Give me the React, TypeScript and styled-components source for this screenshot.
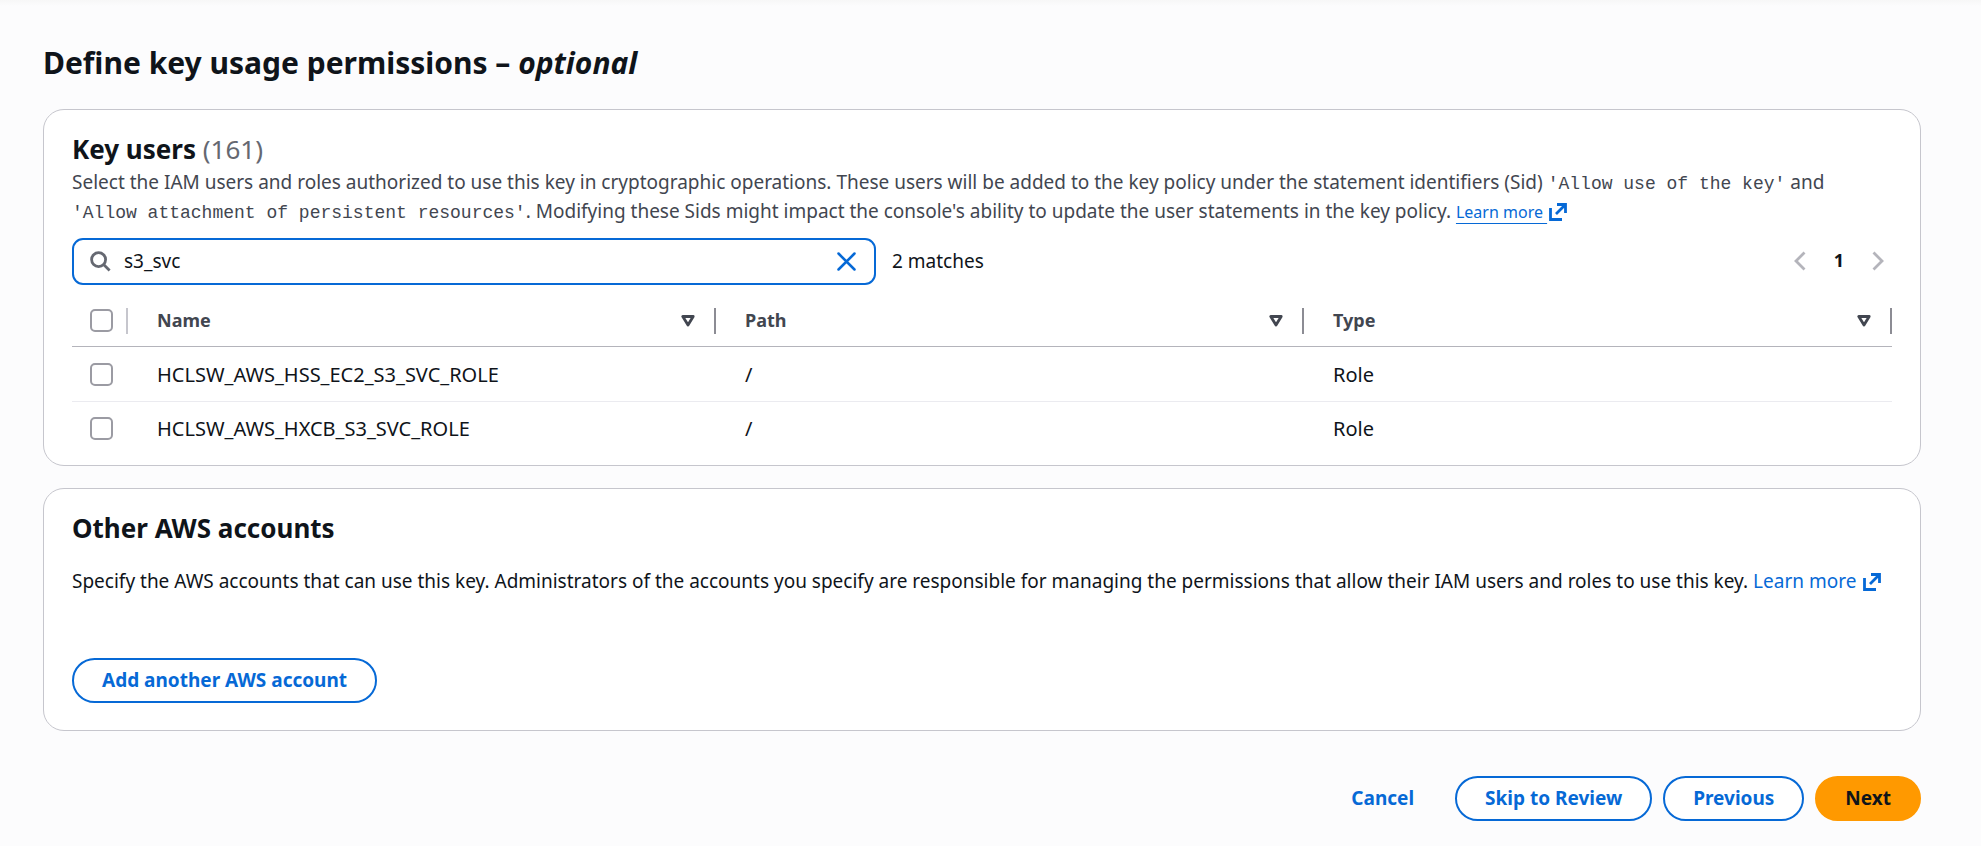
import React, { useState } from "react";
import styled, { createGlobalStyle } from "styled-components";

const color = {
  page: "#fcfcfd",
  text: "#0f141a",
  secondary: "#424650",
  muted: "#656871",
  link: "#0669d6",
  border: "#c6c6cd",
  divider: "#8c8c94",
  rowLine: "#ebebf0",
  primary: "#ff9900",
};

const GlobalStyle = createGlobalStyle`
  * { box-sizing: border-box; }
  body {
    margin: 0;
    background: ${color.page};
    color: ${color.text};
    font: 400 19px/29px "Noto Sans", "Open Sans", sans-serif;
  }
  button, input { font: inherit; color: inherit; }
`;

const Page = styled.main`
  padding: 45px 60px 24px 43px;
  background: linear-gradient(#f7f7f7, ${color.page} 6px);
`;

const PageTitle = styled.h1`
  margin: 0 0 28px;
  font-size: 30px;
  line-height: 36px;
  font-weight: 700;
`;

const Cards = styled.div`
  display: flex;
  flex-direction: column;
  gap: 22px;
`;

const Card = styled.section<{ $bottom: number }>`
  padding: 21px 28px ${(p) => p.$bottom}px;
  border: 1px solid ${color.border};
  border-radius: 21px;
  background: #fff;
`;

const CardTitle = styled.h2`
  margin: 0;
  font-size: 26px;
  line-height: 37px;
  font-weight: 700;
`;

const Counter = styled.span`
  font-weight: 400;
  color: ${color.muted};
`;

const Description = styled.p`
  margin: 0;
  color: ${color.secondary};
`;

const Code = styled.code`
  font: 18px/18px "Liberation Mono", monospace;
  white-space: nowrap;
`;

const Link = styled.a<{ $small?: boolean }>`
  color: ${color.link};
  font-size: ${(p) => (p.$small ? 16 : 19)}px;
  line-height: 18px;
  white-space: nowrap;
  text-decoration: ${(p) => (p.$small ? "underline" : "none")};
  text-underline-offset: 5px;
  svg {
    margin-left: 2px;
    vertical-align: -3px;
  }
`;

const Toolbar = styled.div`
  display: flex;
  align-items: center;
  gap: 16px;
  margin: 12px 0 10px;
`;

const SearchBox = styled.div`
  flex: 0 1 804px;
  display: flex;
  align-items: center;
  gap: 13px;
  height: 47px;
  padding: 0 18px 0 16px;
  border: 2px solid ${color.link};
  border-radius: 11px;
  background: #fff;
`;

const SearchInput = styled.input`
  flex: 1;
  min-width: 0;
  padding: 0;
  border: 0;
  outline: 0;
  background: transparent;
`;

const IconButton = styled.button`
  display: flex;
  padding: 0;
  border: 0;
  background: none;
  cursor: pointer;
`;

const Pagination = styled.nav`
  display: flex;
  align-items: center;
  gap: 28px;
  margin: 0 8px 2px auto;
`;

const PageNumber = styled.button`
  padding: 0;
  border: 0;
  background: none;
  font-size: 18px;
  font-weight: 700;
`;

const Table = styled.table`
  width: 100%;
  table-layout: fixed;
  border-collapse: separate;
  border-spacing: 0;
  font-size: 20px;
`;

const SelectColumn = styled.col`
  width: 56px;
`;

const HeaderCell = styled.th`
  height: 52px;
  padding: 0;
  border-bottom: 1px solid #b4b4bb;
  color: ${color.secondary};
  font-size: 18px;
  font-weight: 700;
  text-align: left;
`;

const HeaderContent = styled.div<{ $select?: boolean }>`
  display: flex;
  align-items: center;
  justify-content: space-between;
  padding-left: ${(p) => (p.$select ? 18 : 29)}px;
`;

const SortGroup = styled.div`
  display: flex;
  align-items: center;
  gap: 19px;
`;

const Divider = styled.span<{ $light?: boolean }>`
  width: 2px;
  height: 26px;
  background: ${(p) => (p.$light ? color.border : color.divider)};
`;

const Row = styled.tr`
  & + & td { border-top: 1px solid ${color.rowLine}; }
`;

const Cell = styled.td<{ $select?: boolean }>`
  height: 54px;
  padding: 0 0 0 ${(p) => (p.$select ? 18 : 29)}px;
`;

const Checkbox = styled.input.attrs({ type: "checkbox" })`
  appearance: none;
  display: block;
  width: 23px;
  height: 23px;
  margin: 0;
  border: 2px solid #9b9ba3;
  border-radius: 5px;
  background: #fff;
  &:checked { background: ${color.link}; border-color: ${color.link}; }
`;

const AccountsText = styled.p`
  margin: 20px 0 62px;
`;

const Button = styled.button<{ $variant?: "primary" | "link" }>`
  height: 45px;
  padding: 0 28px;
  border: 2px solid
    ${(p) => (p.$variant === "primary" ? color.primary : p.$variant === "link" ? "transparent" : color.link)};
  border-radius: 23px;
  background: ${(p) => (p.$variant === "primary" ? color.primary : p.$variant === "link" ? "transparent" : "#fff")};
  color: ${(p) => (p.$variant === "primary" ? color.text : color.link)};
  font-weight: 700;
  white-space: nowrap;
  cursor: pointer;
`;

const Actions = styled.footer`
  display: flex;
  justify-content: flex-end;
  gap: 11px;
  margin-top: 45px;
`;

const ExternalIcon = () => (
  <svg width="18" height="18" viewBox="0 0 18 18" fill="none" stroke="currentColor" strokeWidth="2.8" aria-hidden="true">
    <path d="M1.500 5v11.500h11.500" />
    <path d="M8 1.500h8.500v8.500M16 2L7 11" />
  </svg>
);

const SearchIcon = () => (
  <svg width="21" height="21" viewBox="0 0 21 21" fill="none" stroke={color.muted} strokeWidth="2.8" aria-hidden="true">
    <circle cx="8.6" cy="8.6" r="7" />
    <path d="M13.6 13.6l6 6" />
  </svg>
);

const ClearIcon = () => (
  <svg width="19" height="19" viewBox="0 0 19 19" fill="none" stroke={color.link} strokeWidth="2.5" strokeLinecap="round" aria-hidden="true">
    <path d="M1.5 1.5l16 16M17.5 1.5l-16 16" />
  </svg>
);

const Chevron = ({ right }: { right?: boolean }) => (
  <svg width="12" height="20" viewBox="0 0 12 20" fill="none" stroke="#b4b4bb" strokeWidth="2.8" aria-hidden="true">
    <path d={right ? "M1.5 1.5L10 10l-8.500 8.500" : "M10.500 1.500L2 10l8.500 8.500"} />
  </svg>
);

const SortIcon = () => (
  <svg width="14" height="12" viewBox="0 0 14 12" fill="none" stroke={color.secondary} strokeWidth="2.8" strokeLinejoin="round" aria-hidden="true">
    <path d="M1.800 1.500h10.400L7 10z" />
  </svg>
);

const columns = ["Name", "Path", "Type"];
const roles = [
  { name: "HCLSW_AWS_HSS_EC2_S3_SVC_ROLE", path: "/", type: "Role" },
  { name: "HCLSW_AWS_HXCB_S3_SVC_ROLE", path: "/", type: "Role" },
];

export default function App() {
  const [query, setQuery] = useState("s3_svc");
  const matches = roles.filter((r) => r.name.toLowerCase().includes(query.toLowerCase()));

  return (
    <>
      <GlobalStyle />
      <Page>
        <PageTitle>
          Define key usage permissions – <em>optional</em>
        </PageTitle>
        <Cards>
          <Card $bottom={10}>
            <CardTitle>
              Key users <Counter>(161)</Counter>
            </CardTitle>
            <Description>
              Select the IAM users and roles authorized to use this key in cryptographic operations. These users will be
              added to the key policy under the statement identifiers (Sid) <Code>'Allow use of the key'</Code> and{" "}
              <Code>'Allow attachment of persistent resources'</Code>. Modifying these Sids might impact the console's
              ability to update the user statements in the key policy.{" "}
              <Link href="#key-users" $small>
                Learn more&nbsp;
                <ExternalIcon />
              </Link>
            </Description>
            <Toolbar>
              <SearchBox>
                <SearchIcon />
                <SearchInput
                  aria-label="Find key users"
                  value={query}
                  onChange={(e) => setQuery(e.target.value)}
                />
                <IconButton aria-label="Clear" onClick={() => setQuery("")}>
                  <ClearIcon />
                </IconButton>
              </SearchBox>
              <span>{matches.length} matches</span>
              <Pagination aria-label="Pages">
                <IconButton aria-label="Previous page">
                  <Chevron />
                </IconButton>
                <PageNumber>1</PageNumber>
                <IconButton aria-label="Next page">
                  <Chevron right />
                </IconButton>
              </Pagination>
            </Toolbar>
            <Table>
              <colgroup>
                <SelectColumn />
                <col />
                <col />
                <col />
              </colgroup>
              <thead>
                <tr>
                  <HeaderCell>
                    <HeaderContent $select>
                      <Checkbox aria-label="Select all" />
                      <Divider $light />
                    </HeaderContent>
                  </HeaderCell>
                  {columns.map((label) => (
                    <HeaderCell key={label} scope="col">
                      <HeaderContent>
                        {label}
                        <SortGroup>
                          <IconButton aria-label={`Sort by ${label}`}>
                            <SortIcon />
                          </IconButton>
                          <Divider />
                        </SortGroup>
                      </HeaderContent>
                    </HeaderCell>
                  ))}
                </tr>
              </thead>
              <tbody>
                {matches.map((role) => (
                  <Row key={role.name}>
                    <Cell $select>
                      <Checkbox aria-label={`Select ${role.name}`} />
                    </Cell>
                    <Cell>{role.name}</Cell>
                    <Cell>{role.path}</Cell>
                    <Cell>{role.type}</Cell>
                  </Row>
                ))}
              </tbody>
            </Table>
          </Card>
          <Card $bottom={27}>
            <CardTitle>Other AWS accounts</CardTitle>
            <AccountsText>
              Specify the AWS accounts that can use this key. Administrators of the accounts you specify are
              responsible for managing the permissions that allow their IAM users and roles to use this key.{" "}
              <Link href="#accounts">
                Learn more&nbsp;
                <ExternalIcon />
              </Link>
            </AccountsText>
            <Button>Add another AWS account</Button>
          </Card>
        </Cards>
        <Actions>
          <Button $variant="link">Cancel</Button>
          <Button>Skip to Review</Button>
          <Button>Previous</Button>
          <Button $variant="primary">Next</Button>
        </Actions>
      </Page>
    </>
  );
}
